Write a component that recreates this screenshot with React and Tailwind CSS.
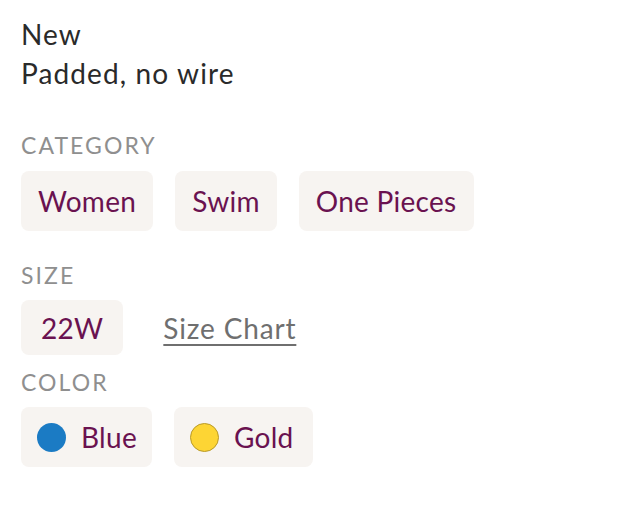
import React from 'react';

const font = { fontFamily: '"Lato", "Noto Sans", sans-serif' };

const Chip = ({ children, className = '' }) => (
    <div className={`flex items-center rounded-lg bg-[#f7f4f1] text-[28px] tracking-[0.01em] text-[#6a1250] ${className}`}>
        {children}
    </div>
);

const Label = ({ children, className = '' }) => (
    <div className={`text-[23px] leading-[24px] tracking-[0.09em] text-[#8f8f8f] ${className}`}>{children}</div>
);

const Dot = ({ color }) => (
    <span className={`mr-[15px] inline-block h-[29px] w-[29px] rounded-full ${color}`} />
);

const App = () => {
    return (
        <div className="min-h-[516px] w-[630px] bg-white px-[21px] pt-[15px]" style={font}>
            <div className="text-[28px] leading-[39px] tracking-[0.04em] text-[#2a2a2a]">
                <div>New</div>
                <div>Padded, no wire</div>
            </div>

            <Label className="mt-[40px]">CATEGORY</Label>
            <div className="mt-[14px] flex gap-[22px]">
                <Chip className="h-[60px] px-[17px]">Women</Chip>
                <Chip className="h-[60px] px-[17px]">Swim</Chip>
                <Chip className="h-[60px] px-[17px]">One Pieces</Chip>
            </div>

            <Label className="mt-[32px]">SIZE</Label>
            <div className="mt-[13px] flex items-center gap-[40px]">
                <Chip className="h-[55px] px-[20px]">22W</Chip>
                <a href="#" className="text-[28px] tracking-[0.03em] text-[#6f6f6f] underline underline-offset-[5px]">Size Chart</a>
            </div>

            <Label className="mt-[15px]">COLOR</Label>
            <div className="mt-[13px] flex gap-[22px]">
                <Chip className="h-[60px] pl-[16px] pr-[15px]">
                    <Dot color="bg-[#1b7bc4]" />
                    Blue
                </Chip>
                <Chip className="h-[60px] pl-[16px] pr-[19px]">
                    <Dot color="bg-[#fdd534] border border-[#b89a2a]" />
                    Gold
                </Chip>
            </div>
        </div>
    );
};

export default App;
